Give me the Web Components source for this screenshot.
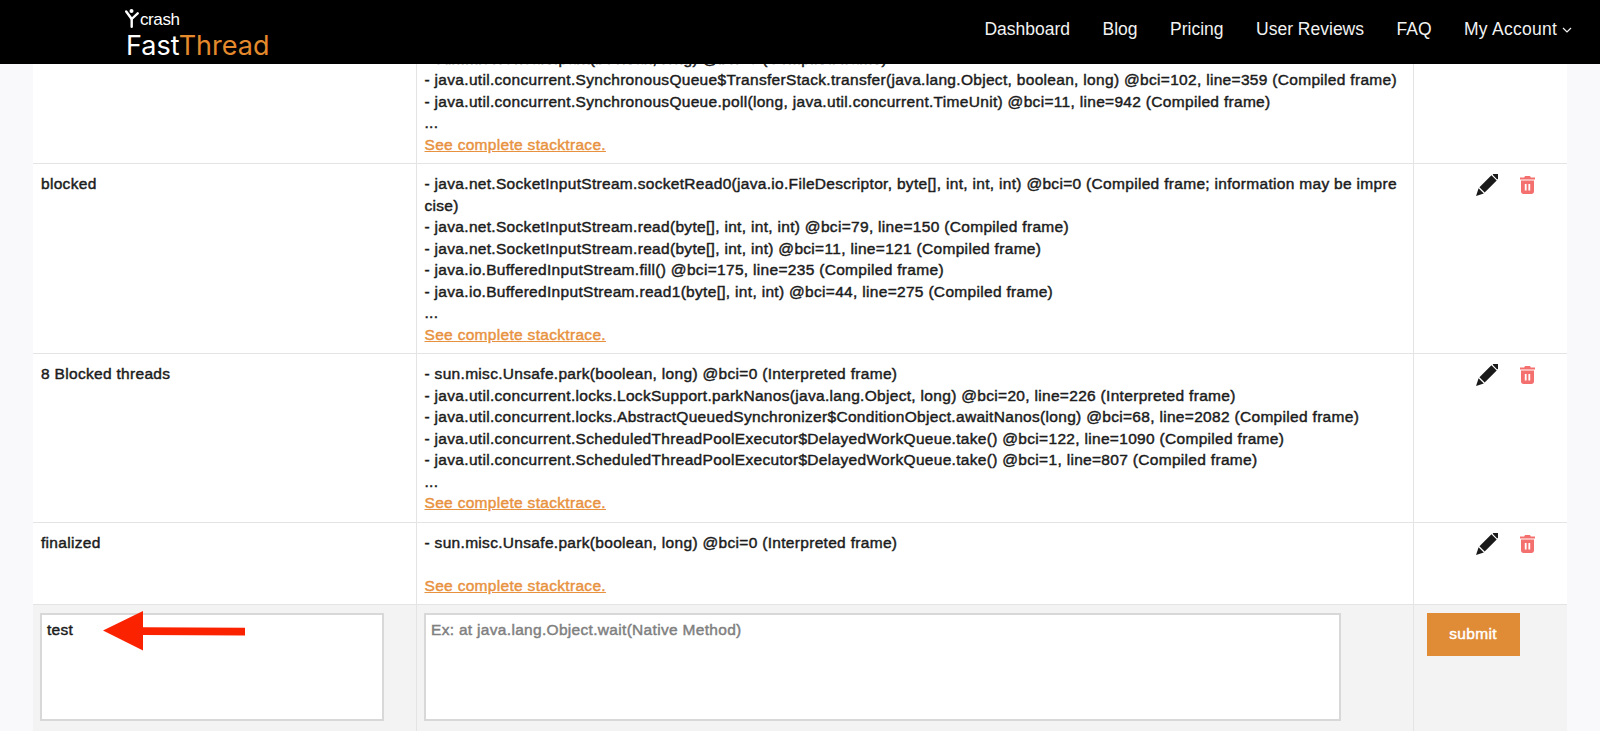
<!DOCTYPE html>
<html><head><meta charset="utf-8"><style>
html,body{margin:0;padding:0;height:731px;overflow:hidden;background:#f9f9fb;font-family:"Liberation Sans",Arial,sans-serif}
</style></head><body>
<ft-header></ft-header>
<ft-table>
<ft-row>
<span slot="label"></span>
<div>- sun.misc.Unsafe.park(boolean, long) @bci=0 (Compiled frame)</div>
<div>- java.util.concurrent.SynchronousQueue$TransferStack.transfer(java.lang.Object, boolean, long) @bci=102, line=359 (Compiled frame)</div>
<div>- java.util.concurrent.SynchronousQueue.poll(long, java.util.concurrent.TimeUnit) @bci=11, line=942 (Compiled frame)</div>
<div>...</div>
<a href="#">See complete stacktrace.</a>
</ft-row>
<ft-row actions>
<span slot="label">blocked</span>
<div>- java.net.SocketInputStream.socketRead0(java.io.FileDescriptor, byte[], int, int, int) @bci=0 (Compiled frame; information may be imprecise)</div>
<div>- java.net.SocketInputStream.read(byte[], int, int, int) @bci=79, line=150 (Compiled frame)</div>
<div>- java.net.SocketInputStream.read(byte[], int, int) @bci=11, line=121 (Compiled frame)</div>
<div>- java.io.BufferedInputStream.fill() @bci=175, line=235 (Compiled frame)</div>
<div>- java.io.BufferedInputStream.read1(byte[], int, int) @bci=44, line=275 (Compiled frame)</div>
<div>...</div>
<a href="#">See complete stacktrace.</a>
</ft-row>
<ft-row actions>
<span slot="label">8 Blocked threads</span>
<div>- sun.misc.Unsafe.park(boolean, long) @bci=0 (Interpreted frame)</div>
<div>- java.util.concurrent.locks.LockSupport.parkNanos(java.lang.Object, long) @bci=20, line=226 (Interpreted frame)</div>
<div>- java.util.concurrent.locks.AbstractQueuedSynchronizer$ConditionObject.awaitNanos(long) @bci=68, line=2082 (Compiled frame)</div>
<div>- java.util.concurrent.ScheduledThreadPoolExecutor$DelayedWorkQueue.take() @bci=122, line=1090 (Compiled frame)</div>
<div>- java.util.concurrent.ScheduledThreadPoolExecutor$DelayedWorkQueue.take() @bci=1, line=807 (Compiled frame)</div>
<div>...</div>
<a href="#">See complete stacktrace.</a>
</ft-row>
<ft-row actions>
<span slot="label">finalized</span>
<div>- sun.misc.Unsafe.park(boolean, long) @bci=0 (Interpreted frame)</div>
<div>&nbsp;</div>
<a href="#">See complete stacktrace.</a>
</ft-row>
<ft-form></ft-form>
</ft-table>
<ft-arrow></ft-arrow>
<script>
const vars=`font-size:15.5px;line-height:21.5px;letter-spacing:.31px;color:#1c1c1c;-webkit-text-stroke:.45px currentColor;`;
customElements.define('ft-header',class extends HTMLElement{constructor(){super();this.attachShadow({mode:'open'}).innerHTML=`<style>
:host{display:flex;position:fixed;top:0;left:0;right:0;height:64px;background:#000;z-index:5;justify-content:space-between;padding:0 28px 0 125px;box-sizing:border-box;font-family:"Liberation Sans",sans-serif}
.logo{display:flex;flex-direction:column;padding-top:10px}
.y{display:flex;align-items:flex-end;color:#fff;font:17px/16px "Liberation Sans",sans-serif;letter-spacing:-.4px;height:18px}
.y svg{margin-right:1px;flex:none}
.ft{font:400 27px/30px Inter,sans-serif;color:#fff;margin-top:3px;margin-left:1px}.ft b{font-weight:400;color:#e58a2c}
nav{display:flex;gap:32.5px;color:#f2f2f2;font-size:17.5px;align-items:center;height:58px}
nav span:last-child{letter-spacing:.25px}
nav svg{margin-left:5px;vertical-align:2px}
</style><div class="logo"><div class="y"><svg width="14" height="20" viewBox="0 0 14 20"><g fill="none" stroke="#fff" stroke-width="2.400" stroke-linecap="round"><path d="M1.200 3.500 6.700 11V18.700"/><path d="M6.700 11 12.700 5.300"/></g><circle cx="6.500" cy="3" r="2" fill="#fff"/></svg><span>crash</span></div><div class="ft">Fast<b>Thread</b></div></div>
<nav><span>Dashboard</span><span>Blog</span><span>Pricing</span><span>User Reviews</span><span>FAQ</span><span>My Account<svg width="10" height="6" viewBox="0 0 10 6"><path d="M1 1l4 4 4-4" fill="none" stroke="#f2f2f2" stroke-width="1.200"/></svg></span></nav>`}});
customElements.define('ft-table',class extends HTMLElement{constructor(){super();this.attachShadow({mode:'open'}).innerHTML=`<style>
:host{display:block;margin:38.5px 33px 0;background:#fff}
</style><slot></slot>`}});
customElements.define('ft-row',class extends HTMLElement{constructor(){super();const s=this.hasAttribute('actions');this.attachShadow({mode:'open'}).innerHTML=`<style>
:host{display:grid;grid-template-columns:383px 998px 1fr;border-bottom:1px solid #e4e4e4;${vars}}
.c{padding:9px 8px 8px;box-sizing:border-box}
.m{border-left:1px solid #e4e4e4;border-right:1px solid #e4e4e4;word-break:break-all;padding-left:7.5px;padding-right:11px}
::slotted(a){color:#e8923f;text-decoration:underline}
.a{display:flex;padding:10px 0 0 62px;gap:22px;align-items:flex-start;-webkit-text-stroke:0}
</style><div class="c"><slot name="label"></slot></div><div class="c m"><slot></slot></div><div class="c a">${s?`<svg width="22" height="22" viewBox="0 0 22 22"><g transform="rotate(45 11 11)" fill="#1a1a1a"><rect x="7.300" y="-4.500" width="7.400" height="4.300" rx="1.500"/><rect x="7.300" y="1" width="7.400" height="17"/><path d="M7.300 19.200h7.400L11 26.500z"/></g></svg><svg width="15" height="18" viewBox="0 0 15 18" style="margin-top:2px"><path fill="#f4706f" d="M5 0h5l.8 1.500H15v2H0v-2h4.200zM1 4.500h13V15.500c0 1.400-1.100 2.500-2.500 2.500h-8C2.100 18 1 16.900 1 15.500zM4.800 8v6.500h1.800V8zM8.400 8v6.500h1.800V8z" fill-rule="evenodd"/></svg>`:''}</div>`}});
customElements.define('ft-form',class extends HTMLElement{constructor(){super();this.attachShadow({mode:'open'}).innerHTML=`<style>
:host{display:grid;grid-template-columns:383px 998px 1fr;background:#f3f3f4;${vars}height:128px}
.c{padding:7.5px 0 0 7px;box-sizing:border-box}
.m{border-left:1px solid #e4e4e4;border-right:1px solid #e4e4e4}
.t{box-sizing:border-box;height:108px;border:2px solid #d8d8d8;background:#fff;padding:4.5px 5px;display:block}
.ph{color:#808080}
button{all:unset;box-sizing:border-box;display:flex;align-items:center;justify-content:center;width:93px;height:43px;background:#e08c36;color:#fff;margin-left:5.5px}
</style><div class="c"><div class="t" style="width:343.500px">test</div></div><div class="c m"><div class="t ph" style="width:916.500px">Ex: at java.lang.Object.wait(Native Method)</div></div><div class="c"><button>submit</button></div>`}});
customElements.define('ft-arrow',class extends HTMLElement{constructor(){super();this.attachShadow({mode:'open'}).innerHTML=`<style>:host{position:fixed;left:102.500px;top:610.500px;display:block}svg{display:block}</style><svg width="142" height="40" viewBox="0 0 142 40"><path fill="#fb2200" d="M0 19.500 40 0V16.200L142 16.700V24.500L40 24V39.500z"/></svg>`}});
</script>
</body></html>
